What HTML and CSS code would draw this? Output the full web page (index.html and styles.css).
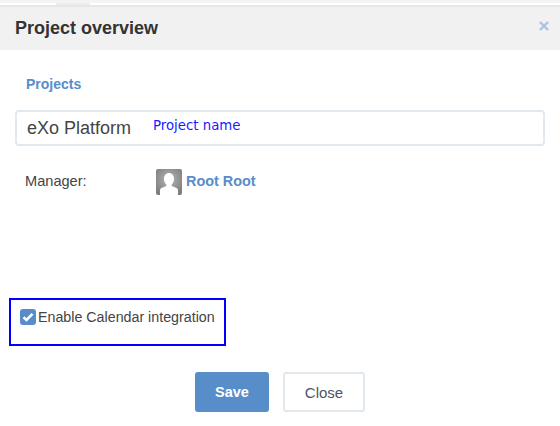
FILE: index.html
```html
<!DOCTYPE html>
<html lang="en">
<head>
    <meta charset="UTF-8">
    <title>Project overview</title>
    <link rel="stylesheet" href="styles.css">
</head>
<body>
    <div class="topstrip"><span class="topstrip-tab"></span></div>
    <div class="dialog">
        <div class="dialog-header">
            <h1>Project overview</h1>
            <svg class="close-x" width="10" height="10" viewBox="0 0 10 10"><path d="M1 1L9 9M9 1L1 9" stroke="#a9c2e2" stroke-width="2.4" fill="none"/></svg>
        </div>
        <div class="dialog-body">
            <a class="breadcrumb">Projects</a>
            <div class="name-field">
                <span class="name-value">eXo Platform</span>
                <span class="name-hint">Project name</span>
            </div>
            <div class="manager-row">
                <span class="manager-label">Manager:</span>
                <span class="manager-user">
                    <svg class="avatar" width="26" height="26" viewBox="0 0 26 26">
                        <defs>
                            <radialGradient id="avatarBg" cx="50%" cy="40%" r="65%">
                                <stop offset="0" stop-color="#b5b5b5"/>
                                <stop offset="1" stop-color="#7d7d7d"/>
                            </radialGradient>
                        </defs>
                        <rect width="26" height="26" rx="2" fill="url(#avatarBg)"/>
                        <path d="M13 4c3 0 5 2.400 5 5.800 0 2.600-1 4.500-2.300 5.700v1.500l4.800 2c1.200.5 1.500 1.500 1.500 3V26H4v-4c0-1.500.3-2.500 1.500-3l4.800-2v-1.500C9 14.300 8 12.400 8 9.800 8 6.400 10 4 13 4z" fill="#fff"/>
                    </svg>
                    <a class="manager-name">Root Root</a>
                </span>
            </div>
            <div class="calendar-box">
                <label class="calendar-label">
                    <span class="check">
                        <svg width="16" height="16" viewBox="0 0 16 16"><path d="M3.500 8.200L6.500 11L12.500 4.800" stroke="#fff" stroke-width="2.600" fill="none"/></svg>
                    </span>
                    Enable Calendar integration
                </label>
            </div>
            <div class="actions">
                <button class="btn btn-primary">Save</button>
                <button class="btn">Close</button>
            </div>
        </div>
    </div>
</body>
</html>
```

FILE: styles.css
```css
body {
    margin: 0;
    background-color: #fff;
    font-family: "Liberation Sans", Arial, sans-serif;
    color: #333;
    overflow: hidden;
}
.topstrip {
    height: 3px;
    background-color: #f4f4f4;
    margin-bottom: 2px;
    position: relative;
}
.topstrip-tab {
    position: absolute;
    top: 3px;
    left: 56px;
    width: 34px;
    height: 2px;
    background-color: #ececec;
}
.dialog-header {
    height: 43px;
    border-top: 2px solid #e1e8ee;
    background-color: #f1f1f1;
    padding: 0 11px 0 15px;
    display: flex;
    justify-content: space-between;
    align-items: center;
}
.dialog-header h1 {
    margin: 0;
    font-size: 18px;
    font-weight: bold;
    color: #333;
}
.close-x {
    margin-bottom: 6px;
}
.dialog-body {
    padding: 26px 15px 0;
}
.breadcrumb {
    display: block;
    margin-left: 11px;
    font-size: 14px;
    line-height: 16px;
    font-weight: bold;
    color: #578dc9;
}
.name-field {
    margin-top: 18px;
    height: 32px;
    border: 2px solid #e1e8ee;
    border-radius: 4px;
    padding-left: 10px;
    display: flex;
    align-items: center;
}
.name-value {
    width: 126px;
    font-size: 18px;
    color: #444;
}
.name-hint {
    margin-bottom: 5px;
    font-family: "DejaVu Sans", sans-serif;
    font-size: 13.3px;
    color: #1a1aff;
}
.manager-row {
    margin-top: 23px;
    padding-left: 10px;
    display: flex;
    align-items: center;
}
.manager-label {
    width: 131px;
    margin-bottom: 2px;
    font-size: 14.6px;
    color: #444;
}
.manager-user {
    display: flex;
    align-items: center;
    gap: 4px;
}
.manager-name {
    margin-bottom: 2px;
    font-size: 14.4px;
    font-weight: bold;
    color: #578dc9;
}
.calendar-box {
    margin: 103px 0 0 -6px;
    width: 213px;
    height: 44px;
    border: 2px solid #0000ff;
    box-sizing: content-box;
}
.calendar-label {
    padding: 9px 0 0 9px;
    display: flex;
    align-items: center;
    gap: 2px;
    font-size: 14.25px;
    color: #444;
}
.check {
    width: 16px;
    height: 16px;
    border-radius: 3px;
    background-color: #578dc9;
    display: flex;
}
.actions {
    margin-top: 26px;
    display: flex;
    justify-content: center;
    gap: 14px;
}
.btn {
    width: 82px;
    height: 40px;
    background-color: #fff;
    border: 2px solid #e1e8ee;
    border-radius: 3px;
    font-family: "Liberation Sans", Arial, sans-serif;
    font-size: 15px;
    color: #4d5466;
}
.btn-primary {
    width: 74px;
    background-color: #578dc9;
    border-color: #578dc9;
    color: #fff;
    font-weight: bold;
    font-size: 14.5px;
}
```
